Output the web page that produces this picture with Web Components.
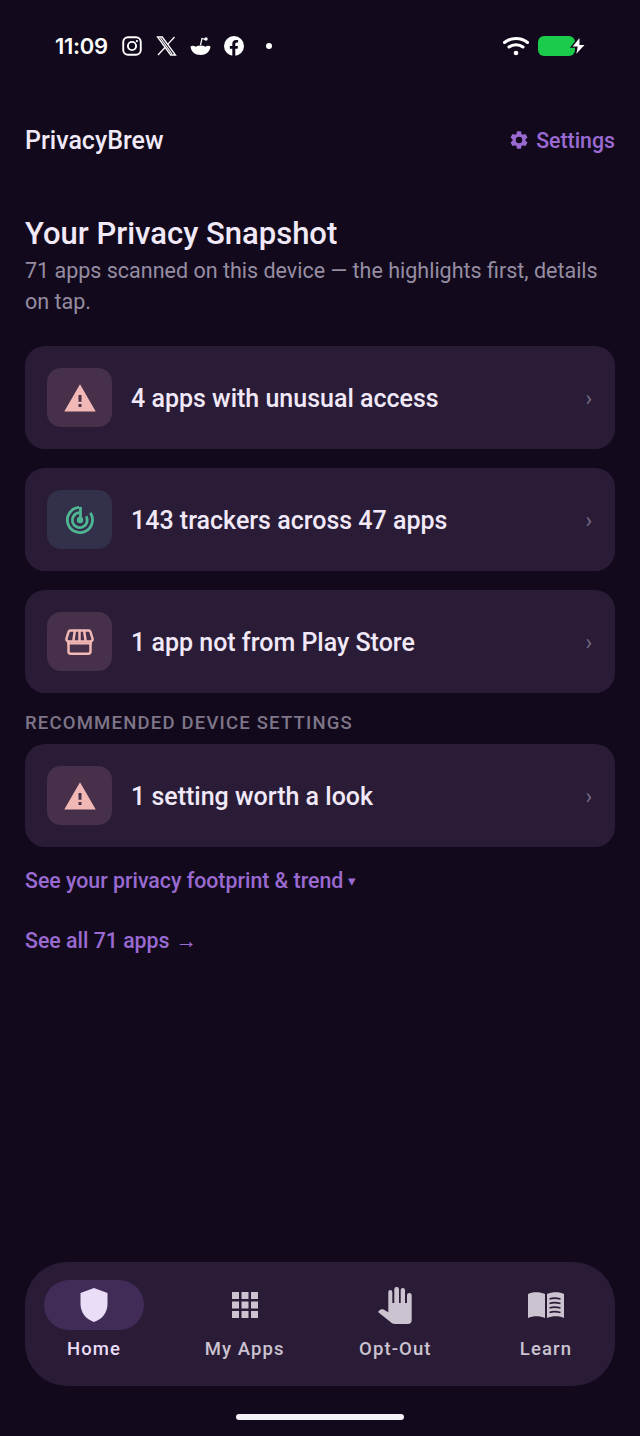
<!DOCTYPE html>
<html>
<head>
<meta charset="utf-8">
<style>
  html, body { margin: 0; padding: 0; background: #120a1c; }
  body { width: 640px; height: 1436px; overflow: hidden; font-family: Roboto, sans-serif; }
  app-shell { height: 1436px; }
</style>
</head>
<body>
<app-shell>
  <status-bar></status-bar>
  <top-bar></top-bar>
  <snapshot-head></snapshot-head>
  <stat-card icon="warn" tone="red">4 apps with unusual access</stat-card>
  <stat-card icon="radar" tone="green">143 trackers across 47 apps</stat-card>
  <stat-card icon="store" tone="red">1 app not from Play Store</stat-card>
  <section-label>RECOMMENDED DEVICE SETTINGS</section-label>
  <stat-card icon="warn" tone="red">1 setting worth a look</stat-card>
  <text-link>See your privacy footprint &amp; trend<span class="tri">▾</span></text-link>
  <text-link class="second">See all 71 apps<span class="arr">→</span></text-link>
  <bottom-nav></bottom-nav>
</app-shell>
<script>
const ICONS = {
  warn: '<svg width="36" height="36" viewBox="0 0 24 24"><path fill="currentColor" d="M1.500 21h21L12 2.800 1.500 21z"/><path fill="#47304a" d="M11 10h2v4.500h-2zM11 16h2v2h-2z"/></svg>',
  radar: '<svg width="30" height="30" viewBox="0 0 32 32" fill="none" stroke="currentColor" stroke-width="3"><path d="M15 2.600A13.400 13.400 0 1 0 27 8.400"/><path d="M15 8.200A8 8 0 1 0 22.600 12"/><path d="M16.500 2v14"/><circle cx="16" cy="16" r="3.400" fill="currentColor" stroke="none"/></svg>',
  store: '<svg width="29" height="26" viewBox="0 0 29 26" fill="none" stroke="currentColor" stroke-width="2.500" stroke-linejoin="round" stroke-linecap="round"><path d="M5.500 1.500h18c1 0 1.700.5 2 1.500l2 6.500c.4 1.800-.8 3-2.500 3H4c-1.700 0-2.900-1.200-2.500-3l2-6.500c.3-1 1-1.500 2-1.500z"/><path d="M9.800 2 8.500 11M14.500 2v9M19.200 2l1.300 9"/><path d="M3.500 13v9.500a2.200 2.200 0 0 0 2.200 2.200h17.600a2.200 2.200 0 0 0 2.200-2.200V13"/><path d="M3 14.500h23" stroke-width="2"/></svg>'
};

class AppShell extends HTMLElement {
  constructor() {
    super();
    this.attachShadow({ mode: 'open' }).innerHTML = `
      <style>
        :host { display: flex; flex-direction: column; color: #f1e9f7; }
        .wrap { display: flex; flex-direction: column; padding: 0 25px; flex: 1; }
      </style>
      <div class="wrap"><slot></slot></div>`;
  }
}
customElements.define('app-shell', AppShell);

class StatusBar extends HTMLElement {
  constructor() {
    super();
    this.attachShadow({ mode: 'open' }).innerHTML = `
      <style>
        :host { display: flex; align-items: center; height: 92px; margin: 0 -25px; padding: 0 52px 0 55px; color: #fff; box-sizing: border-box; }
        .t { font: 600 22px Inter, Roboto, sans-serif; letter-spacing: -0.3px; width: 67px; }
        .apps { display: flex; align-items: center; gap: 14px; }
        .apps svg { display: block; }
        .right { margin-left: auto; display: flex; align-items: center; gap: 9px; }
        .batt { width: 37px; height: 20px; background: #1bcb4b; border-radius: 6px; }
      </style>
      <span class="t">11:09</span>
      <div class="apps">
        <svg width="20" height="20" viewBox="0 0 21 21" fill="none" stroke="#fff" stroke-width="2"><rect x="1.300" y="1.300" width="18.400" height="18.400" rx="5"/><circle cx="10.500" cy="10.500" r="4.300"/><circle cx="15.700" cy="5.300" r="1.200" fill="#fff" stroke="none"/></svg>
        <svg width="21" height="20" viewBox="0 0 21 20" fill="none" stroke="#fff" stroke-width="1.300"><path d="M1.500 1h4.800l13.200 18h-4.800z"/><path d="M18.500 1 11.500 8.600M9.200 11.200 2 19"/><path d="M4.500 2 16 18" stroke-width="1.200"/></svg>
        <svg width="21" height="20" viewBox="0 0 21 20" style="margin-left:-1px"><path fill="#fff" d="M.5 10.500c2-1.200 4-.5 5 .2 3-1.500 7-1.500 10 0 1-.7 3-1.400 5-.2-.5 5-4.500 8.500-10 8.500S1 15.500.5 10.500z"/><path d="M10.500 9 12 2.500l3.500 1" fill="none" stroke="#fff" stroke-width="1.200"/><circle cx="16" cy="3" r="1.700" fill="#fff"/></svg>
        <svg width="20" height="20" viewBox="0 0 20 20" style="margin-left:-1px"><circle cx="10" cy="10" r="10" fill="#fff"/><path fill="#120a1c" d="M8.300 20v-7.200H5.800V10h2.500V7.800c0-2.500 1.500-3.900 3.700-3.900 1.100 0 2.100.2 2.100.2v2.400h-1.200c-1.200 0-1.600.8-1.600 1.500V10h2.700l-.4 2.800h-2.300V20z"/></svg>
        <svg width="6" height="6" viewBox="0 0 6 6" style="margin-left:8px"><circle cx="3" cy="3" r="3" fill="#fff"/></svg>
      </div>
      <div class="right">
        <svg width="26" height="20" viewBox="0 0 26 20" fill="none" stroke="#fff" stroke-width="3" stroke-linecap="round"><path d="M1.500 6.500C8 1 18 1 24.500 6.500"/><path d="M6 11c4-3 10-3 14 0"/><circle cx="13" cy="17" r="2.300" fill="#fff" stroke="none"/></svg>
        <div class="batt"></div>
        <svg width="19" height="22" viewBox="0 0 17 20" style="margin-left:-15px"><path fill="#fff" stroke="#120a1c" stroke-width="1.300" d="M10 1 2 11h5L5.500 19 15.500 8.500h-5.500z"/></svg>
      </div>`;
  }
}
customElements.define('status-bar', StatusBar);

class TopBar extends HTMLElement {
  constructor() {
    super();
    this.attachShadow({ mode: 'open' }).innerHTML = `
      <style>
        :host { display: flex; align-items: center; justify-content: space-between; height: 96px; }
        .brand { font-size: 25px; font-weight: 500; color: #f1e9f7; }
        .set { display: flex; align-items: center; gap: 8px; color: #9a6ad2; font-size: 21.300px; font-weight: 500; }
        svg { display: block; }
      </style>
      <span class="brand">PrivacyBrew</span>
      <span class="set">
        <svg width="18" height="18" viewBox="2 2 20 20"><path fill="currentColor" d="M19.140 12.940c.04-.3.060-.61.060-.94 0-.32-.020-.64-.070-.94l2.030-1.580a.49.49 0 0 0 .12-.61l-1.920-3.320a.488.488 0 0 0-.59-.22l-2.390.96c-.5-.38-1.030-.7-1.620-.94l-.36-2.540a.484.484 0 0 0-.48-.41h-3.840c-.24 0-.43.170-.47.410l-.36 2.540c-.59.240-1.130.570-1.620.94l-2.390-.96c-.22-.08-.47 0-.59.220L2.740 8.870c-.12.210-.08.470.12.610l2.030 1.580c-.05.3-.09.630-.09.940s.02.640.07.940l-2.030 1.580a.49.49 0 0 0-.12.610l1.920 3.320c.12.220.37.290.59.220l2.390-.96c.5.380 1.030.7 1.620.94l.36 2.540c.05.240.24.410.48.410h3.840c.24 0 .44-.170.47-.41l.36-2.540c.59-.240 1.130-.56 1.620-.94l2.390.96c.22.080.47 0 .59-.22l1.920-3.320c.12-.22.070-.47-.12-.61l-2.010-1.580zM12 15.600A3.600 3.600 0 1 1 12 8.400a3.600 3.600 0 0 1 0 7.200z"/></svg>
        Settings
      </span>`;
  }
}
customElements.define('top-bar', TopBar);

class SnapshotHead extends HTMLElement {
  constructor() {
    super();
    this.attachShadow({ mode: 'open' }).innerHTML = `
      <style>
        :host { display: block; margin: 25px 0 29px; }
        h1 { margin: 0; font-size: 31px; line-height: 42px; font-weight: 500; color: #f1e9f7; }
        p { margin: 0; font-size: 21.500px; line-height: 31px; color: #968da2; }
      </style>
      <h1>Your Privacy Snapshot</h1>
      <p>71 apps scanned on this device — the highlights first, details on tap.</p>`;
  }
}
customElements.define('snapshot-head', SnapshotHead);

class StatCard extends HTMLElement {
  constructor() {
    super();
    const root = this.attachShadow({ mode: 'open' });
    const tone = this.getAttribute('tone');
    root.innerHTML = `
      <style>
        :host { display: flex; align-items: center; flex: none; height: 103px; padding: 0 22px; box-sizing: border-box; background: #2a1c37; border-radius: 20px; margin-bottom: 19px; color: #f1e9f7; }
        .ic { width: 65px; height: 59px; border-radius: 14px; display: flex; align-items: center; justify-content: center; flex: none; margin-right: 19px; }
        .ic.red { background: #47304a; color: #f2b8b5; }
        .ic.green { background: #32304a; color: #4fb592; }
        svg { display: block; }
        .label { flex: 1; font-size: 25px; font-weight: 500; padding-top: 2px; }
        .chev { color: #766b80; font-size: 22px; padding: 2px 1px 0 0; }
      </style>
      <div class="ic ${tone}">${ICONS[this.getAttribute('icon')]}</div>
      <div class="label"><slot></slot></div>
      <div class="chev">›</div>`;
  }
}
customElements.define('stat-card', StatCard);

class SectionLabel extends HTMLElement {
  constructor() {
    super();
    this.attachShadow({ mode: 'open' }).innerHTML = `
      <style>
        :host { display: block; flex: none; height: 32px; line-height: 23px; font-size: 18.500px; font-weight: 500; letter-spacing: 1.200px; color: #7f7589; }
      </style>
      <slot></slot>`;
  }
}
customElements.define('section-label', SectionLabel);

class TextLink extends HTMLElement {
  constructor() {
    super();
    this.attachShadow({ mode: 'open' }).innerHTML = `
      <style>
        :host { display: block; flex: none; font-size: 21.300px; font-weight: 500; color: #9a6ad2; line-height: 30px; }
        :host(.second) { margin-top: 30px; }
        ::slotted(.tri) { font-size: 15px; margin-left: 5px; vertical-align: 2px; }
        ::slotted(.arr) { margin-left: 6px; }
      </style>
      <slot></slot>`;
  }
}
customElements.define('text-link', TextLink);

class NavItem extends HTMLElement {
  constructor() {
    super();
    const on = this.hasAttribute('active');
    this.attachShadow({ mode: 'open' }).innerHTML = `
      <style>
        :host { display: flex; flex-direction: column; align-items: center; flex: none; width: 100px; color: ${on ? '#e9ddf8' : '#cbc3d0'}; }
        .pill { width: 100px; height: 50px; border-radius: 25px; display: flex; align-items: center; justify-content: center; background: ${on ? '#402c57' : 'transparent'}; }
        .txt { margin-top: 7px; font-size: 18.500px; font-weight: 500; letter-spacing: 1.100px; line-height: 24px; white-space: nowrap; }
        ::slotted(svg) { display: block; }
      </style>
      <div class="pill"><slot></slot></div>
      <div class="txt">${this.getAttribute('label')}</div>`;
  }
}
customElements.define('nav-item', NavItem);

class BottomNav extends HTMLElement {
  constructor() {
    super();
    this.attachShadow({ mode: 'open' }).innerHTML = `
      <style>
        :host { display: block; position: absolute; left: 25px; right: 25px; top: 1262px; }
        .bar { display: flex; justify-content: space-between; height: 124px; padding: 18px 19px 0; box-sizing: border-box; background: #2a1c37; border-radius: 42px; }
        .home { position: absolute; left: 211px; top: 152px; width: 168px; height: 6px; border-radius: 3px; background: #f4f1f7; }
      </style>
      <div class="bar">
        <nav-item label="Home" active>
          <svg width="30" height="36" viewBox="0 0 30 36"><path fill="currentColor" d="M15 1 28.500 6v11c0 8.500-5.500 15.500-13.500 18C7 32.500 1.500 25.500 1.500 17V6z"/></svg>
        </nav-item>
        <nav-item label="My Apps">
          <svg width="26" height="26" viewBox="0 0 26 26" fill="currentColor"><path d="M0 0h7v7H0zM9.500 0h7v7h-7zM19 0h7v7h-7zM0 9.500h7v7H0zM9.500 9.500h7v7h-7zM19 9.500h7v7h-7zM0 19h7v7H0zM9.500 19h7v7h-7zM19 19h7v7h-7z"/></svg>
        </nav-item>
        <nav-item label="Opt-Out">
          <svg width="34" height="37" viewBox="0 0 34 37" fill="currentColor"><path d="M10.300 5a2 2 0 0 1 4 0v11h2V2.300a2.350 2.350 0 0 1 4.700 0V16h1.700V3.200a2.150 2.150 0 0 1 4.300 0V16h2V8.300a2.350 2.350 0 0 1 4.700 0V33a4 4 0 0 1-4 4H17c-2 0-3.500-1-4.500-2L0 25l1.500-1.700c1-1 3-1.300 4.500-.5l4.300 2.500z"/></svg>
        </nav-item>
        <nav-item label="Learn">
          <svg width="36" height="28" viewBox="0 0 36 28"><path fill="currentColor" d="M0 3C4 .500 12 .500 17 3v24C12 24.500 5 24.500 0 27zM19 3c5-2.500 13-2.500 17 0v24c-4-2.500-12-2.500-17 0z"/><path stroke="#2a1c37" stroke-width="1.800" fill="none" d="M21.500 8c3-1 7-1 11 0M21.500 12.500c3-1 7-1 11 0M21.500 17c3-1 7-1 11 0M21.500 21.500c3-1 7-1 11 0"/></svg>
        </nav-item>
      </div>
      <div class="home"></div>`;
  }
}
customElements.define('bottom-nav', BottomNav);
</script>
</body>
</html>
